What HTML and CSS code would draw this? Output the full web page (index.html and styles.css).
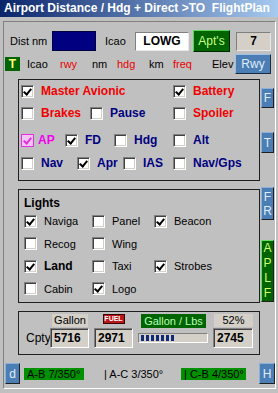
FILE: index.html
```html
<!DOCTYPE html>
<html lang="en">
<head>
    <meta charset="UTF-8">
    <meta name="viewport" content="width=device-width, initial-scale=1.0">
    <title>Airport Distance</title>
    <link rel="stylesheet" href="styles.css">
</head>
<body>
<div class="window">
    <div class="titlebar">Airport Distance / Hdg + Direct &gt;TO&nbsp; FlightPlan</div>
    <div class="client">
        <div class="top-row">
            <span>Dist nm</span>
            <span class="dist-box"></span>
            <span>Icao</span>
            <span class="icao-box">LOWG</span>
            <span class="btn-green">Apt's</span>
            <span class="count-box">7</span>
        </div>
        <div class="col-row">
            <span class="t-box">T</span>
            <span>Icao</span>
            <span class="red">rwy</span>
            <span>nm</span>
            <span class="red">hdg</span>
            <span>km</span>
            <span class="red">freq</span>
            <span>Elev</span>
            <span class="btn-blue">Rwy</span>
        </div>

        <div class="main">
            <div class="panels">
                <div class="panel switches">
                    <div class="sw-row">
                        <label class="item c152"><span class="cb on"></span><span class="txt red-b">Master Avionic</span></label>
                        <label class="item"><span class="cb on"></span><span class="txt red-b">Battery</span></label>
                    </div>
                    <div class="sw-row">
                        <label class="item c69"><span class="cb"></span><span class="txt red-b">Brakes</span></label>
                        <label class="item c83"><span class="cb"></span><span class="txt navy-b">Pause</span></label>
                        <label class="item"><span class="cb"></span><span class="txt red-b">Spoiler</span></label>
                    </div>
                    <div class="sw-row ap-row">
                        <label class="item c44"><span class="cb pink on"></span><span class="txt pink-b ap">AP</span></label>
                        <label class="item c49"><span class="cb on"></span><span class="txt navy-b">FD</span></label>
                        <label class="item c59"><span class="cb"></span><span class="txt navy-b">Hdg</span></label>
                        <label class="item"><span class="cb"></span><span class="txt navy-b">Alt</span></label>
                    </div>
                    <div class="sw-row nav-row">
                        <label class="item c56"><span class="cb"></span><span class="txt navy-b">Nav</span></label>
                        <label class="item c46"><span class="cb on"></span><span class="txt navy-b">Apr</span></label>
                        <label class="item c50"><span class="cb"></span><span class="txt navy-b">IAS</span></label>
                        <label class="item"><span class="cb"></span><span class="txt navy-b">Nav/Gps</span></label>
                    </div>
                </div>

                <div class="panel lights">
                    <div class="lights-title">Lights</div>
                    <div class="lights-grid">
                        <label class="item"><span class="cb on"></span><span class="txt">Naviga</span></label>
                        <label class="item"><span class="cb"></span><span class="txt">Panel</span></label>
                        <label class="item"><span class="cb on"></span><span class="txt">Beacon</span></label>
                        <label class="item"><span class="cb"></span><span class="txt">Recog</span></label>
                        <label class="item"><span class="cb"></span><span class="txt">Wing</span></label>
                        <span></span>
                        <label class="item"><span class="cb on"></span><span class="txt bold">Land</span></label>
                        <label class="item"><span class="cb"></span><span class="txt">Taxi</span></label>
                        <label class="item"><span class="cb on"></span><span class="txt">Strobes</span></label>
                        <label class="item"><span class="cb"></span><span class="txt">Cabin</span></label>
                        <label class="item"><span class="cb on"></span><span class="txt">Logo</span></label>
                    </div>
                </div>

                <div class="panel fuel">
                    <div class="fuel-grid">
                        <span></span>
                        <span class="gray-lbl gallon">Gallon</span>
                        <span class="fuel-badge">FUEL</span>
                        <span class="green-lbl">Gallon / Lbs</span>
                        <span class="gray-lbl pct">52%</span>

                        <span class="cpty">Cpty</span>
                        <span class="value">5716</span>
                        <span class="value">2971</span>
                        <span class="gauge">
                            <i></i><i></i><i></i><i></i><i></i><i></i><i></i>
                        </span>
                        <span class="value">2745</span>
                    </div>
                </div>
            </div>

            <div class="tabs">
                <span class="tab tab-f">F</span>
                <span class="tab tab-t">T</span>
                <span class="tab tab-fr">F<br>R</span>
                <span class="tab tab-aplf">A<br>P<br>L<br>F</span>
            </div>
        </div>

        <div class="status">
            <span class="tab d-tab">d</span>
            <span class="leg">A-B 7/350°</span>
            <span class="leg-plain">| A-C 3/350°</span>
            <span class="leg leg-wide">| C-B 4/350°</span>
            <span class="tab h-tab">H</span>
        </div>
    </div>
</div>
</body>
</html>
```

FILE: styles.css
```css
* {
    box-sizing: border-box;
}
body {
    margin: 0;
    font-family: "Liberation Sans", Arial, sans-serif;
    font-size: 11px;
    color: #000;
    background: #c0c0c0;
}
.window {
    width: 278px;
    height: 393px;
    background: #c0c0c0;
    overflow: hidden;
}
.titlebar {
    height: 17px;
    line-height: 17px;
    padding-left: 4px;
    color: #fff;
    font-size: 12px;
    font-weight: bold;
    white-space: nowrap;
    background: linear-gradient(to right, #0a246a, #a6caf0);
}
.client {
    height: 368px;
    margin: 4px 2px 0 3px;
    border: 1px solid;
    border-color: #808080 #fff #fff #808080;
}

/* top rows */
.top-row {
    display: grid;
    grid-template-columns: 42px 53px 30px 58px 43px 35px;
    align-items: center;
    height: 22px;
    margin-top: 8px;
    padding-left: 6px;
}
.dist-box {
    width: 44px;
    height: 20px;
    background: #000080;
    border: 1px solid #000040;
}
.icao-box, .count-box {
    height: 19px;
    border: 1px solid;
    border-color: #808080 #e8e8e8 #e8e8e8 #808080;
    font-size: 12px;
    font-weight: bold;
    line-height: 17px;
    text-align: center;
}
.icao-box {
    width: 54px;
    background: #fff;
}
.count-box {
    width: 35px;
    background: #d4d0c8;
}
.btn-green {
    width: 37px;
    height: 22px;
    background: #006400;
    border: 1px solid;
    border-color: #58d858 #002800 #002800 #58d858;
    color: #c8ff88;
    font-size: 12px;
    line-height: 20px;
    text-align: center;
}
.col-row {
    display: grid;
    grid-template-columns: 22px 33px 32px 25px 32px 24px 39px 23px auto;
    align-items: center;
    height: 20px;
    margin-top: 2px;
    padding-left: 1px;
}
.red {
    color: #e80000;
}
.t-box {
    width: 15px;
    height: 14px;
    background: #006400;
    color: #ffff80;
    font-size: 12px;
    font-weight: bold;
    line-height: 14px;
    text-align: center;
}
.btn-blue {
    width: 36px;
    height: 20px;
    background: #4a7eb5;
    border: 1px solid;
    border-color: #9ec0e4 #1c2c40 #1c2c40 #9ec0e4;
    color: #e0ecf8;
    font-size: 12px;
    line-height: 18px;
    text-align: center;
}

/* panels */
.main {
    display: flex;
    margin-top: 5px;
    padding-left: 14px;
}
.panels {
    width: 242px;
    display: flex;
    flex-direction: column;
    gap: 8px;
}
.panel {
    border: 1px solid #202020;
}
.switches {
    height: 102px;
}
.lights {
    height: 114px;
    padding: 5px 0 0 5px;
}
.fuel {
    height: 44px;
    padding: 2px 0 0 5px;
}

.item {
    display: flex;
    align-items: center;
    white-space: nowrap;
}
.txt {
    margin-left: 7px;
}
.cb {
    position: relative;
    flex: none;
    width: 13px;
    height: 13px;
    background: #fff;
    border: 1px solid;
    border-color: #808080 #fff #fff #808080;
    box-shadow: inset 1px 1px #404040, inset -1px -1px #d4d0c8;
}
.cb.on::after {
    content: "";
    position: absolute;
    left: 3px;
    top: 1px;
    width: 3px;
    height: 6px;
    border: solid #000;
    border-width: 0 2px 2px 0;
    transform: rotate(40deg);
}
.cb.pink {
    background: #f4c4f4;
    border-color: #e030e0;
    box-shadow: none;
}
.cb.pink::after {
    border-color: #e030e0;
}

.sw-row {
    display: flex;
    align-items: center;
    height: 22px;
    padding-left: 2px;
}
.ap-row {
    margin-top: 5px;
}
.nav-row {
    margin-top: 1px;
}
.c44 { width: 44px; }
.c46 { width: 46px; }
.c49 { width: 49px; }
.c50 { width: 50px; }
.c56 { width: 56px; }
.c59 { width: 59px; }
.c69 { width: 69px; }
.c83 { width: 83px; }
.c152 { width: 152px; }

.red-b, .navy-b, .pink-b {
    font-size: 12px;
    font-weight: bold;
}
.red-b { color: #f00000; }
.navy-b { color: #000080; }
.pink-b { color: #f000f0; }
.ap {
    margin-left: 4px;
}

.lights-title {
    height: 15px;
    line-height: 16px;
    font-size: 12px;
    font-weight: bold;
}
.lights-grid {
    display: grid;
    grid-template-columns: 68px 62px auto;
    grid-auto-rows: 22.5px;
    align-items: center;
}
.bold {
    font-size: 12px;
    font-weight: bold;
}

/* fuel */
.fuel-grid {
    display: grid;
    grid-template-columns: 21px 39px 39px 70px 40px;
    grid-template-rows: 14px 20px;
    column-gap: 5px;
    align-items: start;
}
.gray-lbl {
    height: 13px;
    background: #d4d0c8;
    line-height: 13px;
    text-align: center;
}
.gallon {
    width: 36px;
    margin-left: 2px;
}
.pct {
    width: 39px;
    margin-left: 1px;
}
.fuel-badge {
    justify-self: center;
    width: 22px;
    height: 10px;
    background: #b81818;
    border: 1px solid #3a0000;
    color: #fff;
    font-size: 7px;
    font-weight: bold;
    line-height: 8px;
    text-align: center;
}
.green-lbl {
    width: 65px;
    height: 14px;
    margin-left: 3px;
    background: #006400;
    color: #b8ffb8;
    line-height: 14px;
    text-align: center;
}
.cpty {
    align-self: center;
    padding-left: 2px;
    font-size: 12px;
    white-space: nowrap;
}
.value {
    height: 20px;
    padding-left: 3px;
    background: #d4d0c8;
    border: 1px solid;
    border-color: #808080 #fff #fff #808080;
    box-shadow: inset 1px 1px #404040;
    font-size: 12px;
    font-weight: bold;
    line-height: 19px;
}
.gauge {
    display: flex;
    gap: 2px;
    height: 10px;
    margin-top: 5px;
    padding: 1px 2px;
    background: #d4d0c8;
    border: 1px solid;
    border-color: #808080 #fff #fff #808080;
}
.gauge i {
    width: 3px;
    height: 6px;
    background: #102a78;
}

/* side tabs */
.tabs {
    display: flex;
    flex-direction: column;
    margin-left: 1px;
}
.tab {
    display: flex;
    align-items: center;
    justify-content: center;
    width: 13px;
    background: #4a7eb5;
    border: 1px solid;
    border-color: #8cb0d8 #202020 #202020 #8cb0d8;
    color: #e0ecf8;
    font-size: 12px;
    line-height: 14px;
    text-align: center;
}
.tab-f {
    height: 20px;
    margin-top: 9px;
}
.tab-t {
    height: 21px;
    margin-top: 24px;
}
.tab-fr {
    height: 33px;
    margin-top: 34px;
}
.tab-aplf {
    height: 62px;
    margin-top: 20px;
    background: #006400;
    border-color: #60e060 #202020 #202020 #60e060;
    color: #d0ff70;
    line-height: 15px;
}

/* status bar */
.status {
    display: grid;
    grid-template-columns: 19px 80px 77px 78px auto;
    align-items: center;
    height: 21px;
    margin-top: 8px;
    padding-left: 1px;
}
.d-tab {
    width: 15px;
    height: 21px;
}
.h-tab {
    width: 16px;
    height: 21px;
}
.leg {
    width: 60px;
    height: 12px;
    padding-left: 3px;
    background: #009000;
    line-height: 12px;
    white-space: nowrap;
}
.leg-wide {
    width: 65px;
}
.leg-plain {
    white-space: nowrap;
}
```
